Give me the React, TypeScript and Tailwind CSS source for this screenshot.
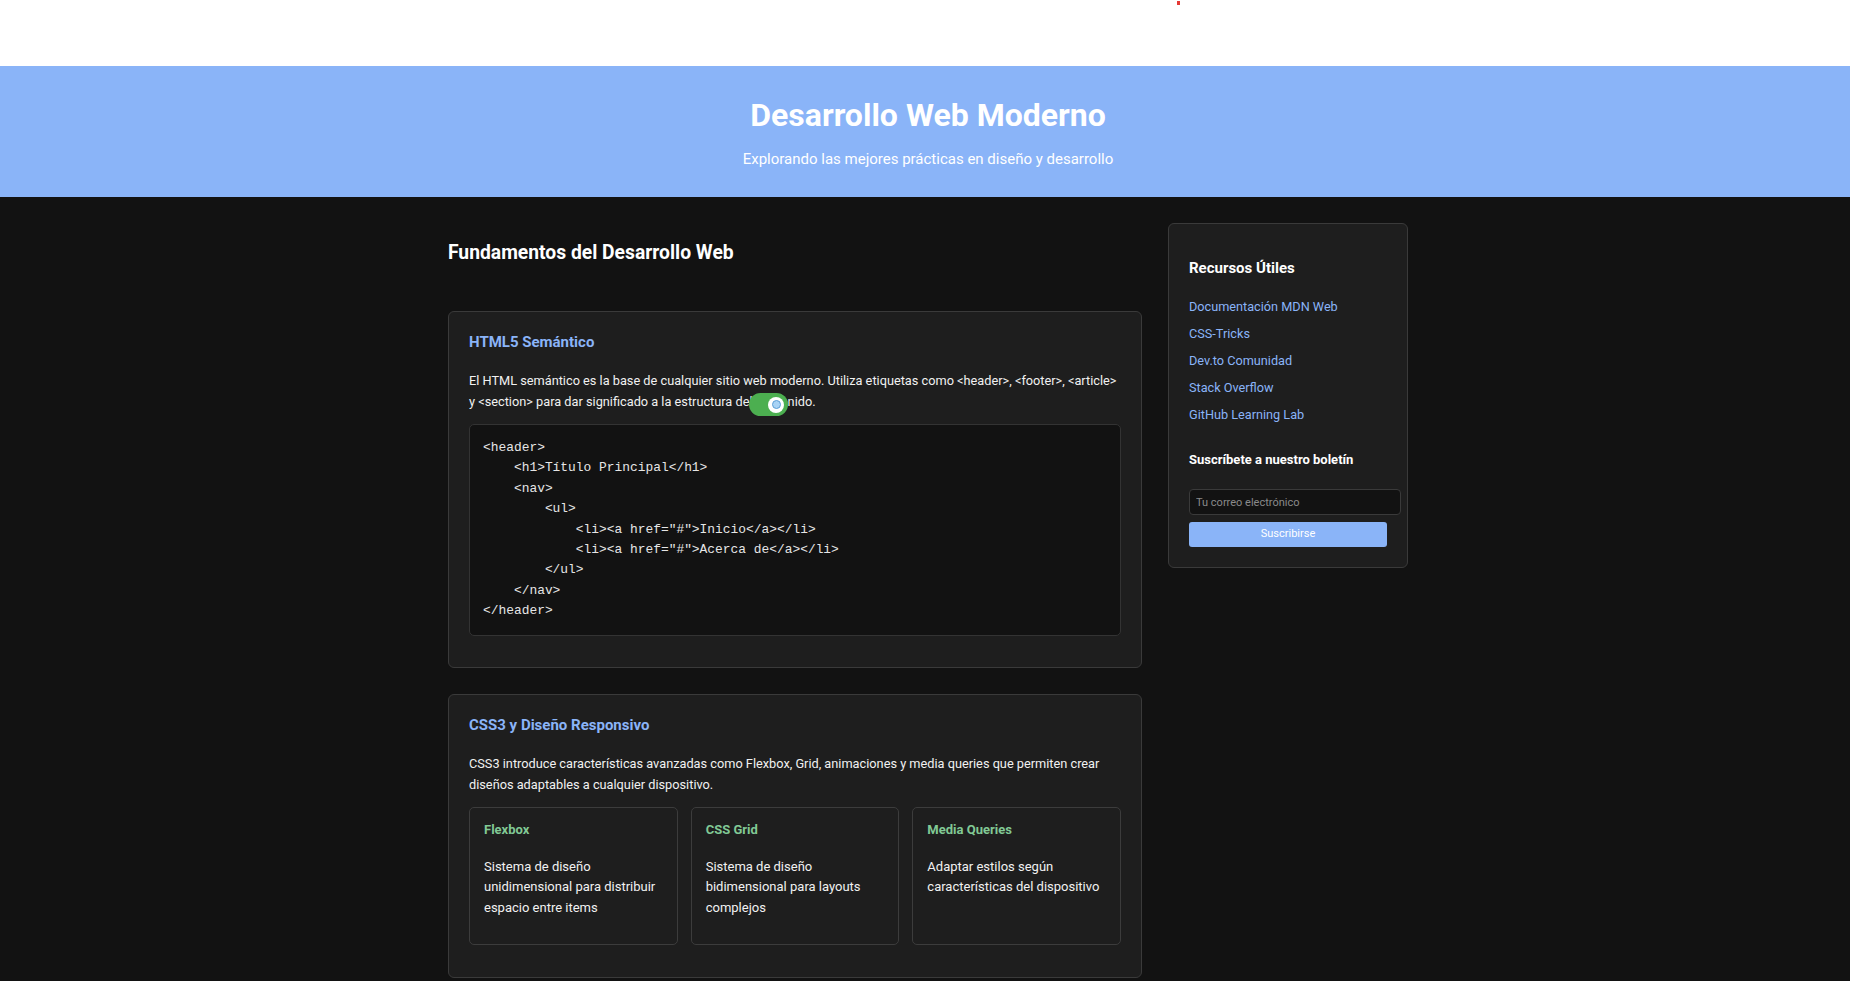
import React from "react";

const codeLines = [
  "<header>",
  "    <h1>Título Principal</h1>",
  "    <nav>",
  "        <ul>",
  '            <li><a href="#">Inicio</a></li>',
  '            <li><a href="#">Acerca de</a></li>',
  "        </ul>",
  "    </nav>",
  "</header>",
];

const features = [
  { title: "Flexbox", text: "Sistema de diseño unidimensional para distribuir espacio entre items" },
  { title: "CSS Grid", text: "Sistema de diseño bidimensional para layouts complejos" },
  { title: "Media Queries", text: "Adaptar estilos según características del dispositivo" },
];

const links = [
  "Documentación MDN Web",
  "CSS-Tricks",
  "Dev.to Comunidad",
  "Stack Overflow",
  "GitHub Learning Lab",
];

// floating toggle that sits on top of the first paragraph
const Toggle: React.FC = () => (
  <span className="absolute left-[300px] top-[81px] flex h-[23px] w-[39px] items-center justify-end rounded-full bg-[#4caf50] pr-[4px]">
    <span className="flex h-[16px] w-[16px] items-center justify-center rounded-full bg-white">
      <span className="h-[9px] w-[9px] rounded-full border border-[#5c9fd6] bg-[#a9d3f5]" />
    </span>
  </span>
);

export default function App() {
  return (
    <div className="relative min-h-screen bg-[#121212] pl-[6px] font-['Roboto','Noto_Sans',sans-serif] text-[#f1f1f1]">
      <span className="absolute left-[1177px] top-[1px] h-[4px] w-[3px] bg-[#e53935]" />
      <div className="h-[66px] bg-white -ml-[6px]" />

      <header className="-ml-[6px] h-[131px] bg-[#8ab4f8] pl-[6px] pt-[29px] text-center text-white">
        <h1 className="text-[32px] font-bold leading-[40px]">Desarrollo Web Moderno</h1>
        <p className="mt-[14px] text-[15px] font-normal leading-[20px]">
          Explorando las mejores prácticas en diseño y desarrollo
        </p>
      </header>

      <div className="mx-auto grid w-[960px] grid-cols-[694px_240px] items-start gap-[26px] pt-[26px] pb-[40px]">
        <main>
          <h2 className="mt-[16px] mb-[44px] text-[19.3px] font-bold leading-[28px] text-white">
            Fundamentos del Desarrollo Web
          </h2>

          <article className="relative mb-[26px] rounded-[6px] border border-[#3a3a3a] bg-[#1e1e1e] p-[20px]">
            <h3 className="mb-[18px] text-[15px] font-bold leading-[20px] text-[#8ab4f8]">HTML5 Semántico</h3>
            <p className="mb-[12px] text-[12.75px] leading-[21px]">
              El HTML semántico es la base de cualquier sitio web moderno. Utiliza etiquetas como &lt;header&gt;,
              &lt;footer&gt;, &lt;article&gt; y &lt;section&gt; para dar significado a la estructura del contenido.
            </p>
            <Toggle />
            <pre className="mb-[11px] rounded-[5px] border border-[#333] bg-[#121212] px-[13px] py-[13px] font-['Liberation_Mono','Courier_New',monospace] text-[12.9px] leading-[20.4px] text-[#e6e6e6]">
              {codeLines.join("\n")}
            </pre>
          </article>

          <article className="rounded-[6px] border border-[#3a3a3a] bg-[#1e1e1e] p-[20px]">
            <h3 className="mb-[18px] text-[15px] font-bold leading-[20px] text-[#8ab4f8]">CSS3 y Diseño Responsivo</h3>
            <p className="mb-[12px] text-[12.75px] leading-[21px]">
              CSS3 introduce características avanzadas como Flexbox, Grid, animaciones y media queries que permiten
              crear diseños adaptables a cualquier dispositivo.
            </p>
            <div className="mb-[12px] grid grid-cols-3 gap-[13px]">
              {features.map((f) => (
                <div key={f.title} className="rounded-[5px] border border-[#3c3c3c] bg-[#1e1e1e] px-[14px] pt-[13px] pb-[26px]">
                  <h4 className="mb-[19px] text-[13px] font-bold leading-[17px] text-[#81c995]">{f.title}</h4>
                  <p className="text-[13px] leading-[20.5px]">{f.text}</p>
                </div>
              ))}
            </div>
          </article>
        </main>

        <aside className="rounded-[6px] border border-[#3a3a3a] bg-[#1e1e1e] px-[20px] pt-[34px] pb-[20px]">
          <h3 className="mb-[19px] text-[15px] font-bold leading-[20px] text-white">Recursos Útiles</h3>
          <ul className="flex flex-col gap-[7px] text-[12.7px] leading-[20px] text-[#8ab4f8]">
            {links.map((l) => (
              <li key={l}>
                <a href="#">{l}</a>
              </li>
            ))}
          </ul>
          <h4 className="mt-[26px] mb-[20px] text-[13px] font-bold leading-[18px] text-white">
            Suscríbete a nuestro boletín
          </h4>
          <input
            className="box-content block h-[24px] w-full rounded-[4px] border border-[#3a3a3a] bg-[#121212] px-[6px] text-[11px] text-white placeholder:text-[#8a8a8a]"
            placeholder="Tu correo electrónico"
          />
          <button className="mt-[7px] block h-[25px] w-full rounded-[3px] bg-[#8ab4f8] text-[11px] text-white">
            Suscribirse
          </button>
        </aside>
      </div>
    </div>
  );
}
